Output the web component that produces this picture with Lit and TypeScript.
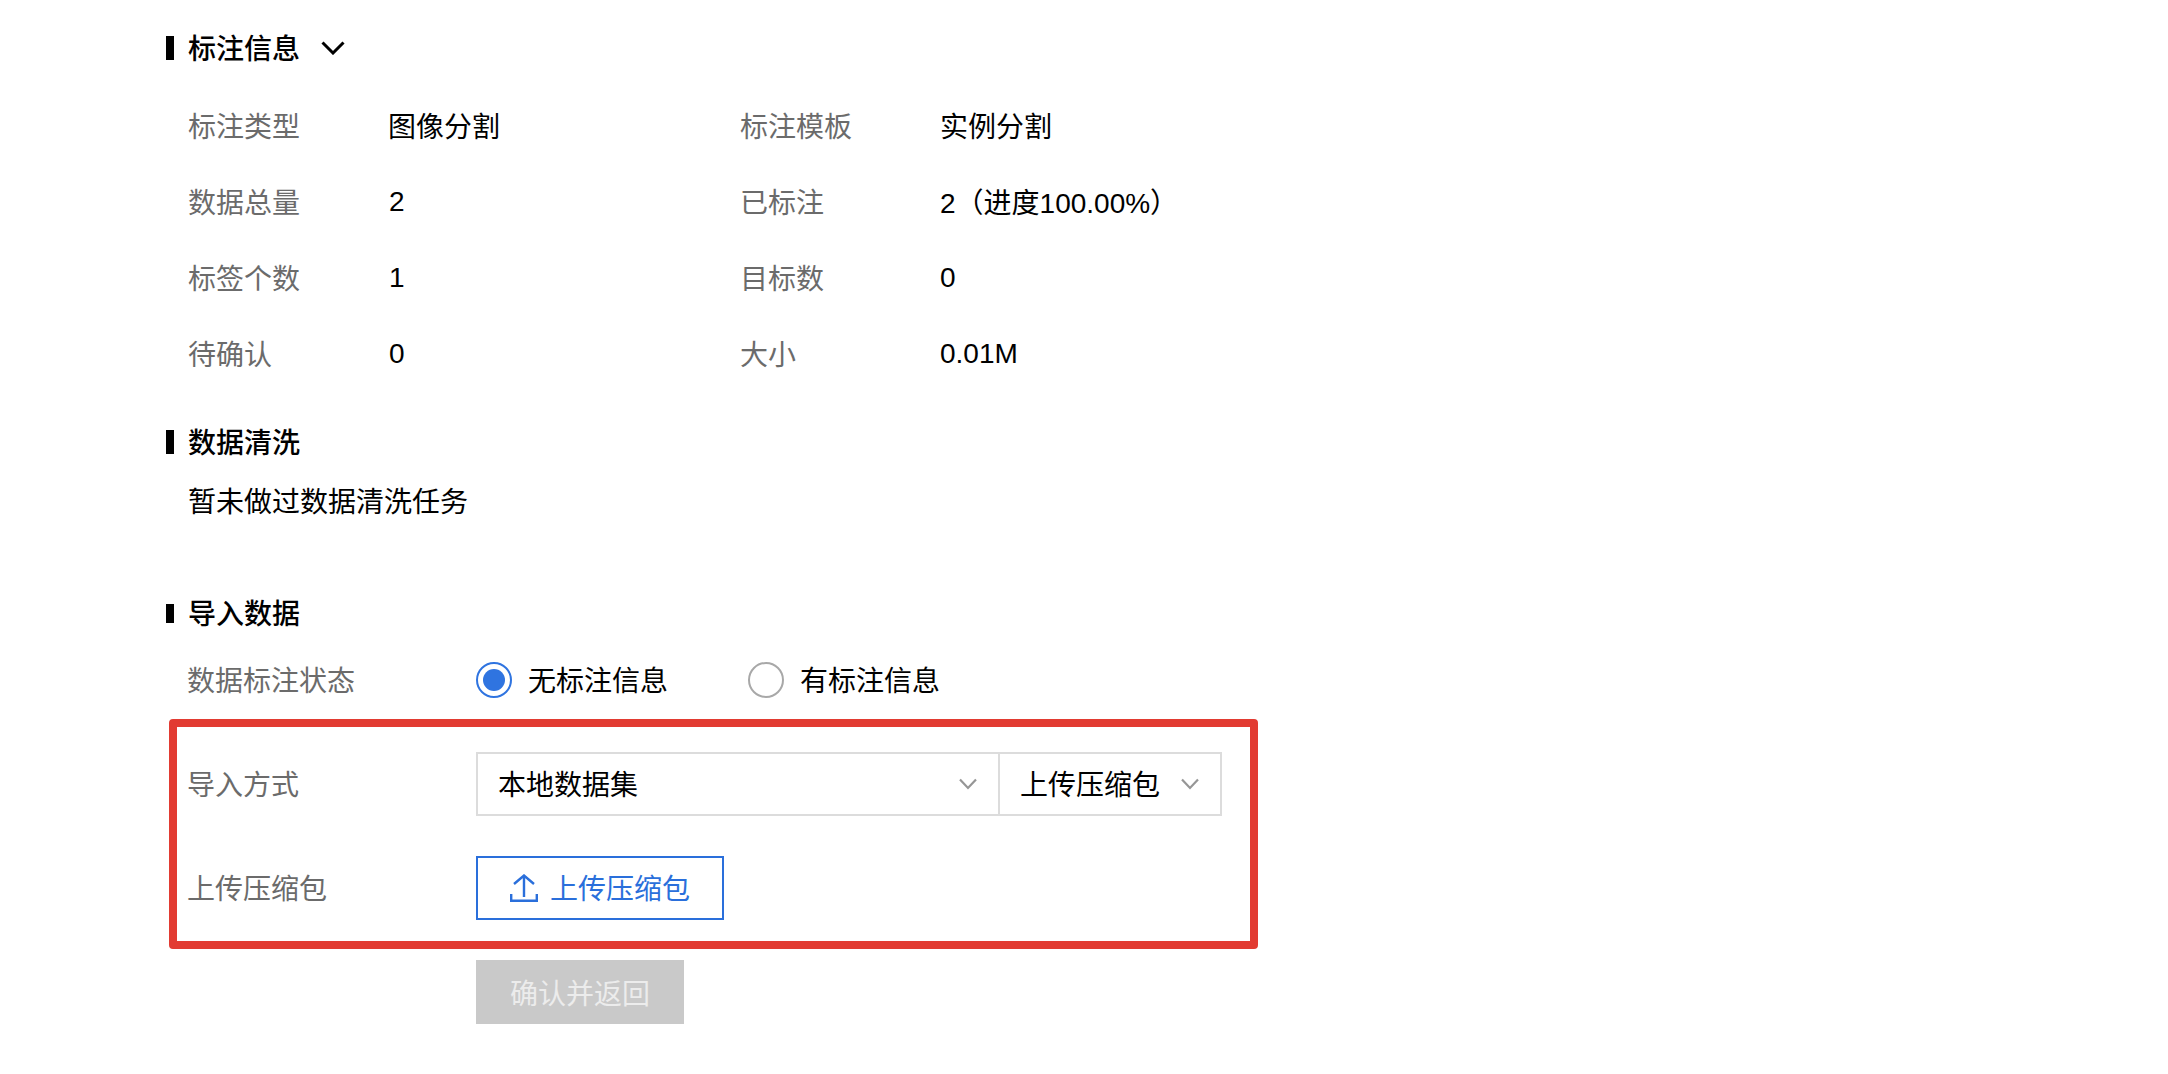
import { LitElement, html, css, svg } from "lit";
import { customElement } from "lit/decorators.js";

const chevron = svg`<path d="M1 1.5 L9 10 L17 1.5" fill="none" stroke="currentColor" stroke-width="2.2"/>`;

@customElement("app-root")
export class AppRoot extends LitElement {
  static styles = css`
    :host {
      display: block;
      min-height: 1074px;
      background: #fff;
      color: #000;
      font-family: "Liberation Sans", "Noto Sans CJK SC", sans-serif;
      font-size: 28px;
      box-sizing: border-box;
      padding: 28px 0 0 166px;
    }
    .t {
      margin-bottom: 2px;
    }
    .first {
      margin-left: -1px;
    }
    .title {
      display: flex;
      align-items: center;
      height: 40px;
      font-weight: 500;
    }
    .bar {
      width: 8px;
      height: 24px;
      background: #000;
      margin-right: 14px;
    }
    .bar.short {
      height: 19px;
    }
    .toggle {
      width: 24px;
      height: 14px;
      margin-left: 21px;
      color: #000;
    }
    .info {
      display: grid;
      grid-template-columns: 200px 351px 200px auto;
      grid-auto-rows: 76px;
      align-items: center;
      justify-content: start;
      margin: 20px 0 30px 23px;
    }
    .label {
      color: #6b6b6b;
    }
    .note {
      height: 40px;
      line-height: 40px;
      margin: 21px 0 70px 22px;
    }
    .row {
      display: flex;
      align-items: center;
      height: 64px;
    }
    .row .label {
      width: 289px;
    }
    .radio-row {
      margin: 15px 0 7px 21px;
    }
    .radio {
      display: flex;
      align-items: center;
      margin-right: 80px;
    }
    .dot {
      box-sizing: border-box;
      width: 36px;
      height: 36px;
      border-radius: 50%;
      border: 2px solid #a8a8a8;
      margin-right: 16px;
      padding: 5px;
    }
    .dot.on {
      border-color: #2f74e0;
    }
    .dot.on::before {
      content: "";
      display: block;
      width: 100%;
      height: 100%;
      border-radius: 50%;
      background: #2f74e0;
    }
    .box {
      box-sizing: border-box;
      width: 1089px;
      height: 230px;
      margin-left: 3px;
      border: 8px solid #e23b32;
      border-radius: 4px;
      padding: 25px 0 0 10px;
      display: flex;
      flex-direction: column;
      gap: 40px;
    }
    .selects {
      display: flex;
    }
    .select {
      box-sizing: border-box;
      height: 64px;
      display: flex;
      align-items: center;
      justify-content: space-between;
      border: 2px solid #dcdcdc;
      color: #000;
    }
    .select.a {
      width: 524px;
      padding: 0 21px 0 20px;
    }
    .select.b {
      width: 224px;
      margin-left: -2px;
      padding: 0 21px 0 20px;
    }
    .select svg {
      width: 18px;
      height: 12px;
      color: #969696;
    }
    .upload {
      box-sizing: border-box;
      width: 248px;
      height: 64px;
      border: 2px solid #2a6fdb;
      color: #2a6fdb;
      display: flex;
      align-items: center;
      padding-left: 32px;
    }
    .upload svg {
      width: 28px;
      height: 28px;
      margin-right: 12px;
    }
    .submit {
      box-sizing: border-box;
      width: 208px;
      height: 64px;
      margin: 11px 0 0 310px;
      background: #c9c9c9;
      color: #ececec;
      display: flex;
      align-items: center;
      justify-content: center;
    }
  `;

  private info = [
    ["标注类型", "图像分割", "标注模板", "实例分割"],
    ["数据总量", "2", "已标注", "2（进度100.00%）"],
    ["标签个数", "1", "目标数", "0"],
    ["待确认", "0", "大小", "0.01M"],
  ];

  private cjk(s: string) {
    return /[\u4e00-\u9fff]/.test(s) ? "t" : "";
  }

  render() {
    return html`
      <div class="title">
        <span class="bar"></span><span class="t">标注信息</span>
        <svg class="toggle" viewBox="0 0 24 14">
          <path d="M1.5 1.5 L12 12 L22.5 1.5" fill="none" stroke="currentColor" stroke-width="3" />
        </svg>
      </div>
      <div class="info">
        ${this.info.map(
          (r) => html`
            <span class="label t first">${r[0]}</span>
            <span class="${this.cjk(r[1])} ${this.cjk(r[1]) ? "first" : ""}">${r[1]}</span>
            <span class="label t">${r[2]}</span>
            <span class="${this.cjk(r[3])}">${r[3]}</span>
          `,
        )}
      </div>

      <div class="title"><span class="bar"></span><span class="t">数据清洗</span></div>
      <div class="note">暂未做过数据清洗任务</div>

      <div class="title"><span class="bar short"></span><span class="t">导入数据</span></div>
      <div class="row radio-row">
        <span class="label t">数据标注状态</span>
        <span class="radio"><span class="dot on"></span><span class="t">无标注信息</span></span>
        <span class="radio"><span class="dot"></span><span class="t">有标注信息</span></span>
      </div>

      <div class="box">
        <div class="row">
          <span class="label t">导入方式</span>
          <div class="selects">
            <div class="select a">
              <span class="t">本地数据集</span>
              <svg viewBox="0 0 18 12">${chevron}</svg>
            </div>
            <div class="select b">
              <span class="t">上传压缩包</span>
              <svg viewBox="0 0 18 12">${chevron}</svg>
            </div>
          </div>
        </div>
        <div class="row">
          <span class="label t">上传压缩包</span>
          <div class="upload">
            <svg viewBox="0 0 28 28" fill="none" stroke="currentColor" stroke-width="2.4">
              <path d="M14 23 V1.5 M4 10 L14 1.5 L24 10 M1.2 20 V26.8 H26.8 V20" />
            </svg>
            <span class="t">上传压缩包</span>
          </div>
        </div>
      </div>
      <div class="submit">确认并返回</div>
    `;
  }
}
